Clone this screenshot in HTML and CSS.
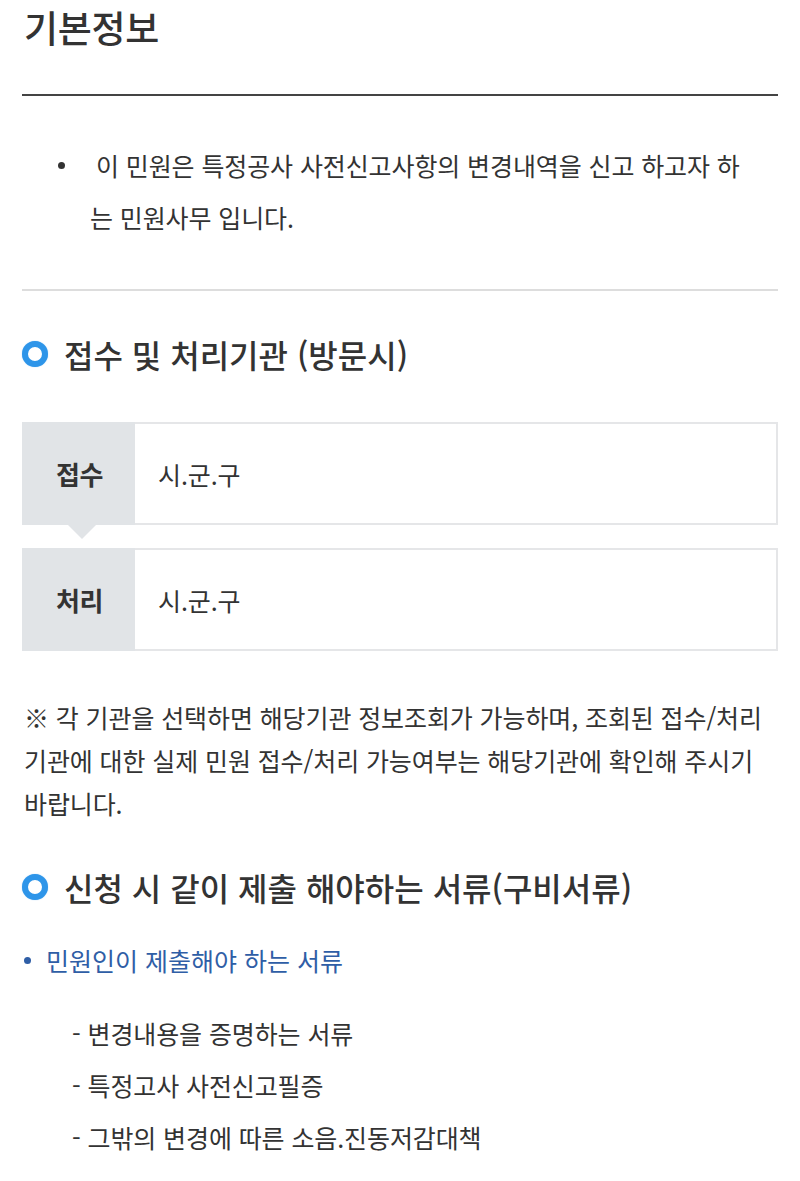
FILE: index.html
```html
<!DOCTYPE html>
<html lang="ko">
<head>
<meta charset="utf-8">
<title>기본정보</title>
<link rel="stylesheet" href="styles.css">
</head>
<body>
<div class="page">
  <h1 class="title">기본정보</h1>
  <div class="intro">
    <ul class="intro-list">
      <li>이 민원은 특정공사 사전신고사항의 변경내역을 신고 하고자 하는 민원사무 입니다.</li>
    </ul>
  </div>

  <h2 class="sec-head"><span class="ring"></span>접수 및 처리기관 (방문시)</h2>

  <div class="org-list">
    <div class="org-row org-first">
      <div class="org-label">접수</div>
      <div class="org-value">시.군.구</div>
    </div>
    <div class="org-row">
      <div class="org-label">처리</div>
      <div class="org-value">시.군.구</div>
    </div>
  </div>

  <p class="note">※ 각 기관을 선택하면 해당기관 정보조회가 가능하며, 조회된 접수/처리 기관에 대한 실제 민원 접수/처리 가능여부는 해당기관에 확인해 주시기 바랍니다.</p>

  <h2 class="sec-head sec-head2"><span class="ring"></span>신청 시 같이 제출 해야하는 서류(구비서류)</h2>

  <div class="doc-group">
    <div class="doc-title"><span class="dot"></span>민원인이 제출해야 하는 서류</div>
    <ul class="doc-list">
      <li>- 변경내용을 증명하는 서류</li>
      <li>- 특정고사 사전신고필증</li>
      <li>- 그밖의 변경에 따른 소음.진동저감대책</li>
    </ul>
  </div>
</div>
</body>
</html>
```

FILE: styles.css
```css
html, body {
  margin: 0;
  padding: 0;
  background: #ffffff;
}

body {
  font-family: "Noto Sans CJK KR", "Noto Sans", sans-serif;
  color: #333333;
}

.page {
  padding: 0 22px;
}

.title {
  margin: 0;
  font-size: 37px;
  font-weight: 500;
  line-height: 54px;
  letter-spacing: -0.3px;
  padding-left: 2px;
  color: #333333;
  height: 94px;
  border-bottom: 2px solid #444444;
}

.intro {
  padding: 43px 0 46px;
  border-bottom: 2px solid #dddddd;
}

.intro-list {
  margin: 0;
  padding: 0 26px 0 68px;
  list-style: none;
}

.intro-list li {
  position: relative;
  font-size: 25px;
  line-height: 52px;
  letter-spacing: -0.1px;
  text-indent: 6px;
  color: #333333;
}

.intro-list li::before {
  content: "";
  position: absolute;
  left: -32px;
  top: 23px;
  width: 7px;
  height: 7px;
  border-radius: 50%;
  background: #333333;
}

.sec-head {
  margin: 43px 0 0;
  display: flex;
  align-items: center;
  gap: 16px;
  font-size: 32px;
  font-weight: 500;
  line-height: 40px;
  letter-spacing: 0;
  color: #333333;
}

.ring {
  flex: none;
  width: 14px;
  height: 14px;
  border: 6px solid #2e95e9;
  border-radius: 50%;
  background: #ffffff;
  box-shadow: 0 0 1px rgba(46, 149, 233, 0.6);
}

.org-list {
  margin-top: 48px;
  display: flex;
  flex-direction: column;
  gap: 23px;
}

.org-row {
  position: relative;
  display: flex;
  height: 99px;
  border: 2px solid #e5e6e8;
  box-sizing: content-box;
}

.org-label {
  width: 111px;
  flex: none;
  background: #e1e4e7;
  display: flex;
  align-items: center;
  justify-content: center;
  font-size: 26px;
  font-weight: 700;
  color: #333333;
  letter-spacing: -0.3px;
  margin: -2px 0 -2px -2px;
  padding-left: 2px;
}

.org-first .org-label {
  position: relative;
}

.org-first .org-label::after {
  content: "";
  position: absolute;
  left: 46px;
  bottom: -14px;
  width: 0;
  height: 0;
  border-left: 14px solid transparent;
  border-right: 14px solid transparent;
  border-top: 14px solid #e1e4e7;
}

.org-value {
  display: flex;
  align-items: center;
  padding-left: 23px;
  font-size: 25px;
  letter-spacing: -0.1px;
  color: #333333;
}

.note {
  margin: 45px 0 0;
  padding: 0 12px 0 2px;
  font-size: 25px;
  line-height: 43px;
  letter-spacing: -0.1px;
  color: #333333;
}

.sec-head2 {
  margin-top: 42px;
}

.doc-group {
  margin-top: 33px;
}

.doc-title {
  display: flex;
  align-items: center;
  gap: 15px;
  font-size: 25px;
  line-height: 40px;
  letter-spacing: 0;
  color: #2f5ea6;
  padding-left: 2px;
}

.dot {
  flex: none;
  width: 7px;
  height: 7px;
  border-radius: 50%;
  background: #2f5ea6;
}

.doc-list {
  margin: 27px 0 0;
  padding: 0 0 0 50px;
  list-style: none;
}

.doc-list li {
  font-size: 25px;
  line-height: 52px;
  letter-spacing: -0.1px;
  color: #333333;
}
```
